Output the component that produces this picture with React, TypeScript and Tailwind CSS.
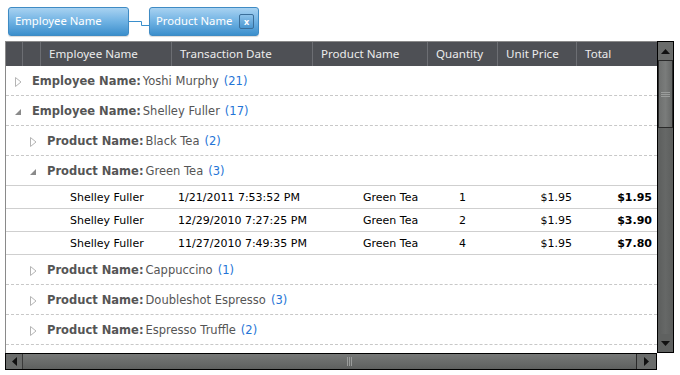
import React from "react";

const F = { fontFamily: "'DejaVu Sans', Verdana, sans-serif" };
const H = { fontFamily: "'Noto Sans', 'Open Sans', sans-serif" };

function Collapsed() {
  return (
    <svg width="7" height="10" viewBox="0 0 7 10" className="shrink-0">
      <path d="M0.5 0.5 L6 5 L0.5 9.5 Z" fill="none" stroke="#b4b4b4" strokeWidth="1" />
    </svg>
  );
}
function Expanded() {
  return (
    <svg width="7" height="10" viewBox="0 0 7 10" className="shrink-0">
      <path d="M6 2 L6 8 L0 8 Z" fill="#8a8a8a" />
    </svg>
  );
}

function GroupRow({ level, expanded, label, value, count, solid }: { level: number; expanded?: boolean; label: string; value: string; count: number; solid?: boolean }) {
  return (
    <div
      className={`h-[30px] flex items-center border-b pt-[2px] text-[11.5px] text-[#555] ${solid ? "border-[#cfcfcf]" : "border-dashed border-[#c8c8c8]"}`}
      style={{ ...F, paddingLeft: level === 0 ? 9 : 24 }}
    >
      <div className="w-[17px] flex items-center justify-start">{expanded ? <Expanded /> : <Collapsed />}</div>
      <span className="font-bold">{label}:</span>
      <span className="ml-[2px]">{value}</span>
      <span className="ml-[5px] text-[#2474d6]">({count})</span>
    </div>
  );
}

function DataRow({ date, qty, total }: { date: string; qty: string; total: string }) {
  return (
    <div className="h-[23px] flex items-center border-b border-[#cfcfcf] pt-[2px] text-[11px] text-black" style={F}>
      <div className="w-[64px] shrink-0" />
      <div className="w-[108px] shrink-0">Shelley Fuller</div>
      <div className="w-[185px] shrink-0">{date}</div>
      <div className="w-[96px] shrink-0">Green Tea</div>
      <div className="w-[40px] shrink-0">{qty}</div>
      <div className="w-[73px] shrink-0 text-right">$1.95</div>
      <div className="w-[80px] shrink-0 text-right font-bold">{total}</div>
    </div>
  );
}

function HeaderCell({ w, children, last }: { w: number; children?: React.ReactNode; last?: boolean }) {
  return (
    <div
      className={`h-full flex items-center pl-[8px] shrink-0 ${last ? "" : "border-r border-[#6c6e73]"}`}
      style={{ width: w }}
    >
      {children}
    </div>
  );
}

function GroupButton({ label, close, w }: { label: string; close?: boolean; w: number }) {
  return (
    <div
      className="h-[29px] rounded-[3px] border border-[#3f8bc4] bg-gradient-to-b from-[#a8d2f1] via-[#6fb2e3] to-[#3b8fcc] flex items-center pl-[6px] pr-[4px] text-white text-[11.3px] shadow-[0_1px_1px_rgba(0,0,0,0.15)]"
      style={{ ...H, width: w }}
    >
      <span className="flex-1">{label}</span>
      {close && (
        <div className="w-[15px] h-[15px] rounded-[2px] border border-[#3b6f9a] bg-gradient-to-b from-[#8cc2ea] to-[#4a97d0] flex items-center justify-center text-[9px] font-bold leading-none text-white">
          x
        </div>
      )}
    </div>
  );
}

export default function App() {
  return (
    <div className="w-[680px] h-[375px] bg-white overflow-hidden relative">
      {/* group panel */}
      <div className="h-[41px] flex items-start pt-[7px] pl-[8px]">
        <GroupButton label="Employee Name" w={121} />
        <svg width="20" height="29" viewBox="0 0 20 29" className="shrink-0">
          <path d="M0 14.5 H12.5 V18.5 H20" fill="none" stroke="#3a8fcc" strokeWidth="1" />
        </svg>
        <GroupButton label="Product Name" close w={110} />
      </div>

      {/* grid */}
      <div className="ml-[5px] w-[669px] h-[329px] flex flex-col">
        <div className="flex h-[312px]">
          <div className="w-[652px] flex flex-col border-l border-t border-[#8a8a8a]">
            <div className="h-[24px] bg-[#4e5055] flex text-[11.6px] text-[#ececec] shrink-0" style={H}>
              <HeaderCell w={17} />
              <HeaderCell w={18} />
              <HeaderCell w={131}>Employee Name</HeaderCell>
              <HeaderCell w={141}>Transaction Date</HeaderCell>
              <HeaderCell w={115}>Product Name</HeaderCell>
              <HeaderCell w={70}>Quantity</HeaderCell>
              <HeaderCell w={79}>Unit Price</HeaderCell>
              <HeaderCell w={80} last>Total</HeaderCell>
            </div>
            <div className="flex-1 overflow-hidden">
              <GroupRow level={0} label="Employee Name" value="Yoshi Murphy" count={21} />
              <GroupRow level={0} expanded label="Employee Name" value="Shelley Fuller" count={17} />
              <GroupRow level={1} label="Product Name" value="Black Tea" count={2} />
              <GroupRow level={1} expanded solid label="Product Name" value="Green Tea" count={3} />
              <DataRow date="1/21/2011 7:53:52 PM" qty="1" total="$1.95" />
              <DataRow date="12/29/2010 7:27:25 PM" qty="2" total="$3.90" />
              <DataRow date="11/27/2010 7:49:35 PM" qty="4" total="$7.80" />
              <GroupRow level={1} label="Product Name" value="Cappuccino" count={1} />
              <GroupRow level={1} label="Product Name" value="Doubleshot Espresso" count={3} />
              <GroupRow level={1} label="Product Name" value="Espresso Truffle" count={2} />
            </div>
          </div>
          {/* vertical scrollbar */}
          <div className="w-[17px] h-full bg-[#5f6160] border border-black flex flex-col">
            <div className="h-[18px] flex items-center justify-center bg-[#6a6c6b]">
              <svg width="9" height="5" viewBox="0 0 9 5"><path d="M0 5 L4.5 0 L9 5 Z" fill="#111" /></svg>
            </div>
            <div className="h-[68px] border border-[#2a2a2a] bg-gradient-to-r from-[#6e706f] via-[#7a7c7b] to-[#666867] flex flex-col items-center justify-center gap-[1px]">
              <div className="w-[9px] h-[1px] bg-[#9a9c9b]" />
              <div className="w-[9px] h-[1px] bg-[#9a9c9b]" />
              <div className="w-[9px] h-[1px] bg-[#9a9c9b]" />
            </div>
            <div className="flex-1 bg-gradient-to-r from-[#5c5e5d] via-[#666867] to-[#5c5e5d]" />
            <div className="h-[18px] flex items-center justify-center">
              <svg width="9" height="5" viewBox="0 0 9 5"><path d="M0 0 L4.5 5 L9 0 Z" fill="#111" /></svg>
            </div>
          </div>
        </div>
        {/* horizontal scrollbar */}
        <div className="flex h-[17px]">
          <div className="w-[652px] h-full border border-black bg-[#5f6160] flex">
            <div className="w-[17px] h-full flex items-center justify-center bg-[#6a6c6b] border-r border-[#3a3a3a]">
              <svg width="5" height="9" viewBox="0 0 5 9"><path d="M5 0 L0 4.5 L5 9 Z" fill="#111" /></svg>
            </div>
            <div className="flex-1 h-full border-r border-[#2a2a2a] bg-gradient-to-b from-[#777978] via-[#6a6c6b] to-[#5e605f] flex items-center justify-center gap-[1px] pl-[40px]">
              <div className="w-[1px] h-[9px] bg-[#9a9c9b]" />
              <div className="w-[1px] h-[9px] bg-[#9a9c9b]" />
              <div className="w-[1px] h-[9px] bg-[#9a9c9b]" />
            </div>
            <div className="w-[19px] h-full flex items-center justify-center bg-[#6a6c6b]">
              <svg width="5" height="9" viewBox="0 0 5 9"><path d="M0 0 L5 4.5 L0 9 Z" fill="#111" /></svg>
            </div>
          </div>
          <div className="w-[17px]" />
        </div>
      </div>
    </div>
  );
}
